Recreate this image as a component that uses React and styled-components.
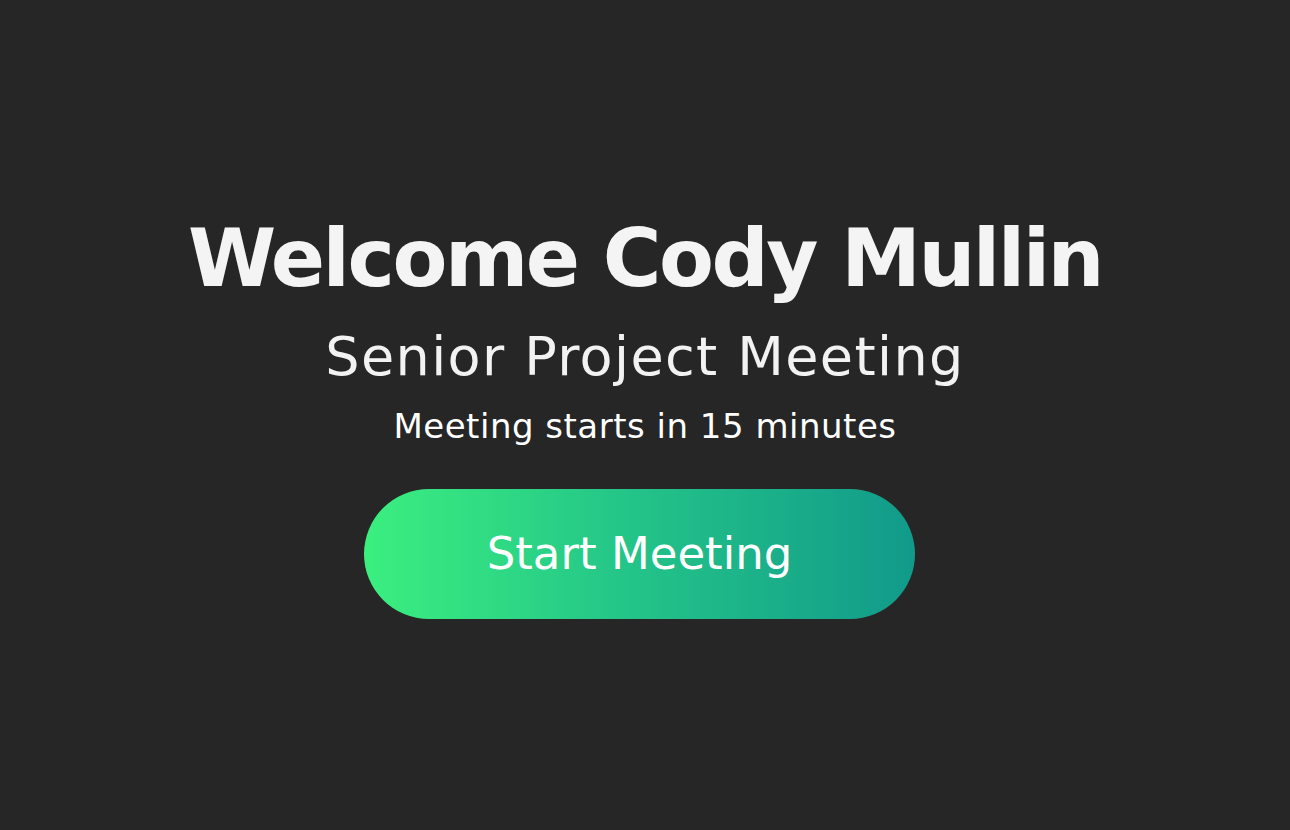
import React from "react";
import styled, { createGlobalStyle } from "styled-components";

const GlobalStyle = createGlobalStyle`
  html, body {
    margin: 0;
    padding: 0;
    background: #262626;
  }
  body {
    font-family: "DejaVu Sans", "Noto Sans", sans-serif;
  }
`;

const Screen = styled.main`
  min-height: 100vh;
  display: flex;
  flex-direction: column;
  align-items: center;
  justify-content: center;
  color: #f5f4f5;
  text-align: center;
`;

const Title = styled.h1`
  margin: 0;
  font-size: 80px;
  font-weight: 700;
  line-height: 96px;
  letter-spacing: -2.5px;
`;

const Subtitle = styled.h2`
  margin: 18px 0 0;
  font-size: 54px;
  font-weight: 400;
  line-height: 64px;
  letter-spacing: 1.4px;
  color: #f2f2f2;
`;

const Countdown = styled.p`
  margin: 17px 0 0;
  font-size: 34px;
  font-weight: 400;
  line-height: 40px;
  letter-spacing: 0.5px;
  color: #ffffff;
`;

const StartButton = styled.button`
  margin: 43px 11px 0 0;
  width: 551px;
  height: 130px;
  padding: 0 0 2px;
  border: none;
  border-radius: 65px;
  background: linear-gradient(90deg, #3bef7f 0%, #25c788 45%, #119a8a 100%);
  color: #ffffff;
  font-family: inherit;
  font-size: 45px;
  font-weight: 400;
  cursor: pointer;
`;

const App = () => {
  return (
    <>
      <GlobalStyle />
      <Screen>
        <Title>Welcome Cody Mullin</Title>
        <Subtitle>Senior Project Meeting</Subtitle>
        <Countdown>Meeting starts in 15 minutes</Countdown>
        <StartButton>Start Meeting</StartButton>
      </Screen>
    </>
  );
};

export default App;
